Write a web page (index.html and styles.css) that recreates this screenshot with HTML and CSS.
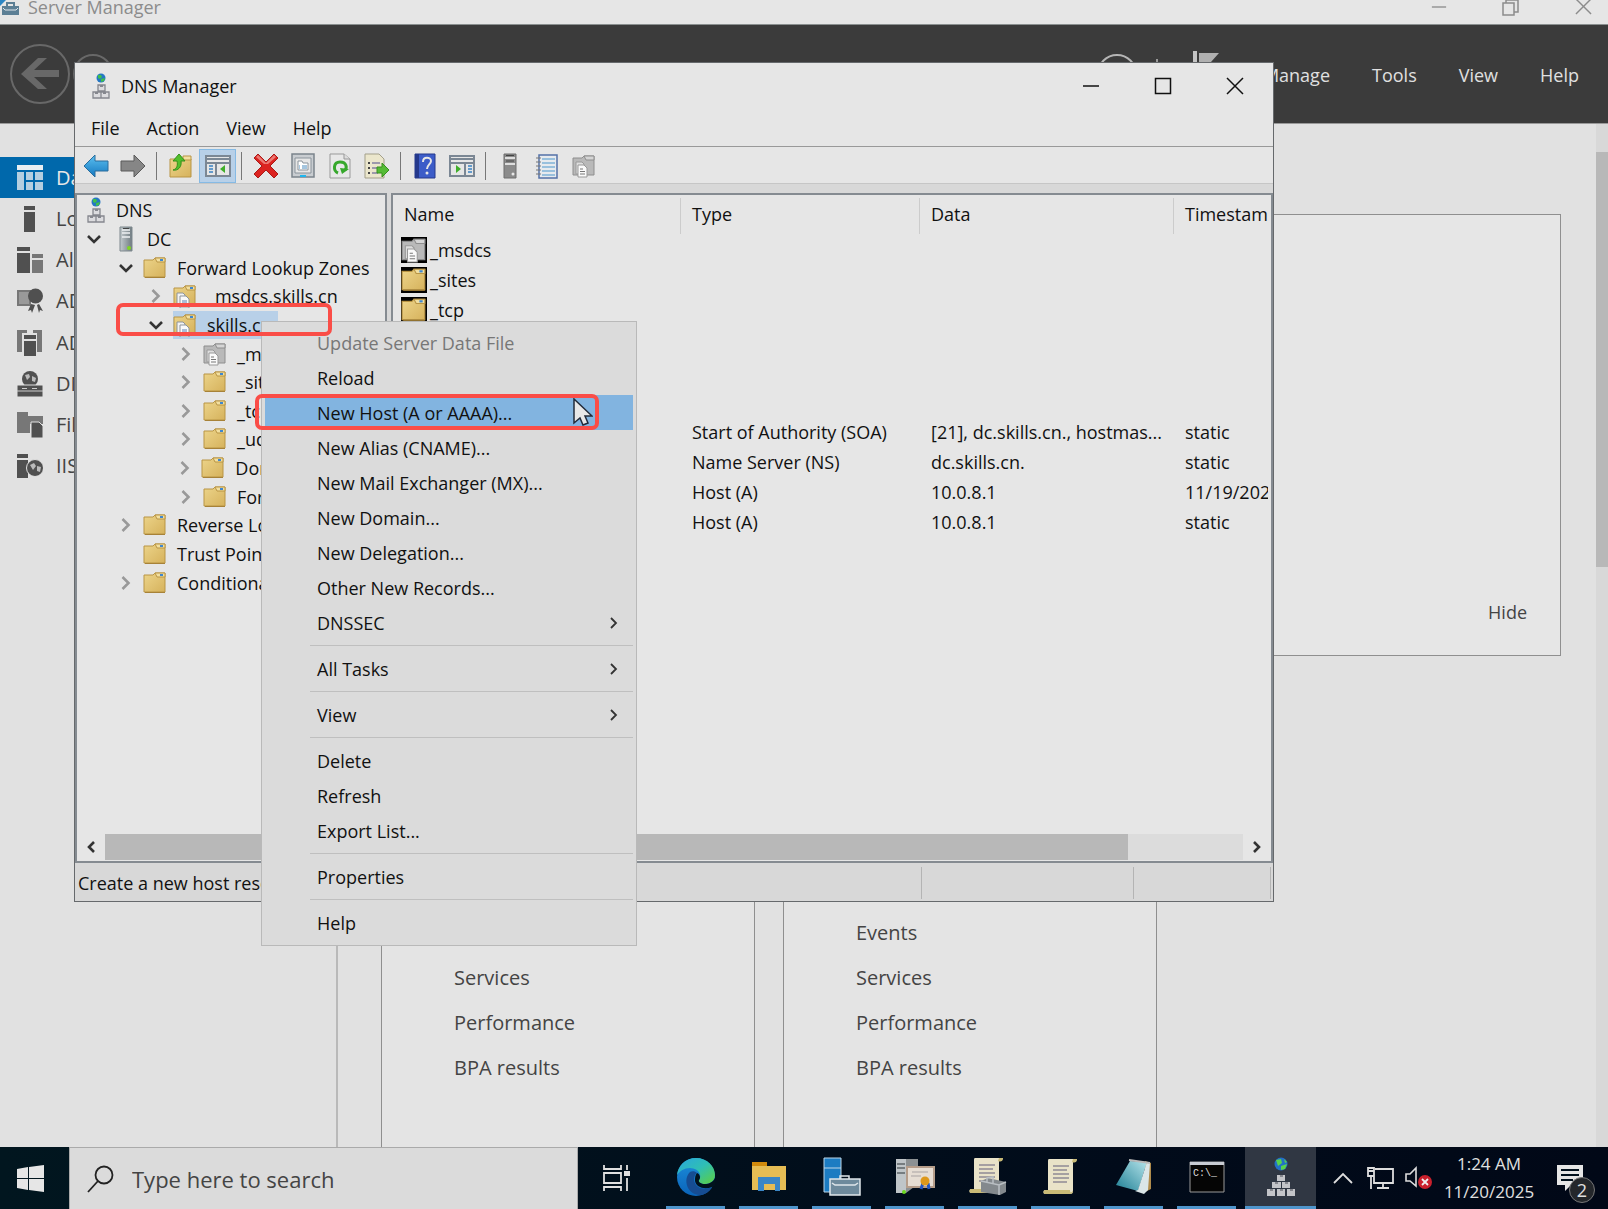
FILE: index.html
```html
<!DOCTYPE html>
<html lang="en">
<head>
    <meta charset="UTF-8">
    <title>DNS Manager</title>
    <link rel="stylesheet" href="styles.css">
</head>
<body>
    <!-- shared icons -->
    <svg class="defs" width="0" height="0">
        <defs>
            <linearGradient id="gold" x1="0" y1="0" x2="1" y2="1"><stop offset="0" stop-color="#ecd48a"/><stop offset="1" stop-color="#d6b25c"/></linearGradient>
            <linearGradient id="steel" x1="0" y1="0" x2="1" y2="0"><stop offset="0" stop-color="#c3cacd"/><stop offset="1" stop-color="#6f7b80"/></linearGradient>
            <linearGradient id="blueArrow" x1="0" y1="0" x2="0" y2="1"><stop offset="0" stop-color="#5cc0f0"/><stop offset="1" stop-color="#1478c0"/></linearGradient>
            <linearGradient id="edgeTop" x1="0" y1="0" x2="1" y2="1"><stop offset="0" stop-color="#2aa6e0"/><stop offset=".5" stop-color="#2fbfb4"/><stop offset="1" stop-color="#5fd03c"/></linearGradient>
            <linearGradient id="edgeLow" x1="0" y1="0" x2="0" y2="1"><stop offset="0" stop-color="#1d8fdc"/><stop offset="1" stop-color="#0a63b8"/></linearGradient>
            <linearGradient id="pad" x1="0" y1="1" x2="1" y2="0"><stop offset="0" stop-color="#1e7f94"/><stop offset="1" stop-color="#b4e3ea"/></linearGradient>
        </defs>
        <symbol id="i-dns" viewBox="0 0 18 26">
            <circle cx="9" cy="5" r="4.5" fill="#2577c4"/>
            <path d="M6 2l3 0 1 2-2 2-2-1zM9 6l4-1-1 3-3 1z" fill="#3fc04a"/>
            <path d="M6 12h7v6h-7zM1 19h8v6h-8zM9 19h8v6h-8z" fill="#dcdcdf" stroke="#85878e" stroke-width="1.3"/>
            <path d="M8 12h3v2h-3zM3 19h3v2h-3zM11 19h3v2h-3z" fill="#85878e"/>
        </symbol>
        <symbol id="i-server" viewBox="0 0 14 26">
            <path d="M1 1h12v24h-12z" fill="url(#steel)" stroke="#7e898e"/>
            <path d="M3 4h8M3 7h8M3 11h8" stroke="#eef1f2" stroke-width="1.6"/>
            <path d="M4 2.500h6" stroke="#444"/>
            <circle cx="10" cy="22" r="2" fill="#7fd821"/>
        </symbol>
        <symbol id="i-server-grey" viewBox="0 0 14 26">
            <path d="M1 1h12v24h-12z" fill="#8b8b8b" stroke="#6e6e6e"/>
            <path d="M2 5h10M2 11h10" stroke="#dedede" stroke-width="2"/>
            <path d="M3 2.500h8M3 8h8" stroke="#444"/>
            <circle cx="10" cy="21" r="1.500" fill="#e8e8e8"/>
        </symbol>
        <symbol id="i-folder" viewBox="0 0 24 24">
            <path d="M1 4h9l2-2h10v19h-21z" fill="url(#gold)" stroke="#b99545"/>
            <path d="M12 2h10v4h-8z" fill="#f2dfa0" stroke="#b99545"/>
            <path d="M17 4h3" stroke="#3f87cf" stroke-width="2"/>
            <path d="M2 21.500h20" stroke="#a78238"/>
        </symbol>
        <symbol id="i-page" viewBox="0 0 24 24">
            <path d="M4 9h6l2 2v9h-8z" fill="#f3f3f3" stroke="#8d949b"/>
            <path d="M7 12h6l3 3v9h-9z" fill="#fafafa" stroke="#8d949b"/>
            <path d="M9 17h5M9 19h5M9 21h4" stroke="#5b80b4"/>
        </symbol>
        <symbol id="i-zone" viewBox="0 0 24 24">
            <use href="#i-folder"/><use href="#i-page"/>
        </symbol>
        <symbol id="i-zone-grey" viewBox="0 0 24 24">
            <path d="M1 4h9l2-2h10v19h-21z" fill="#b9b9b9" stroke="#8e8e8e"/>
            <path d="M12 2h10v4h-8z" fill="#d5d5d5" stroke="#8e8e8e"/>
            <path d="M4 8h6l2 2v10h-8z" fill="#dedede" stroke="#999"/>
            <path d="M6 11h6l3 3v9h-9z" fill="#fafafa" stroke="#999"/>
            <path d="M8 15h3M8 17.500h5M8 20h5" stroke="#777"/>
        </symbol>
        <symbol id="i-down" viewBox="0 0 14 10"><path d="M1 2l6 6 6-6" fill="none" stroke="#333" stroke-width="2.600"/></symbol>
        <symbol id="i-right" viewBox="0 0 10 16"><path d="M1.500 2l6 6-6 6" fill="none" stroke="#999" stroke-width="2.600"/></symbol>
        <symbol id="i-sub" viewBox="0 0 10 14"><path d="M2 2l5 5-5 5" fill="none" stroke="#333" stroke-width="1.800"/></symbol>
        <symbol id="i-arrow" viewBox="0 0 10 14"><path d="M2 2l5 5-5 5" fill="none" stroke="#333" stroke-width="2.600"/></symbol>
        <symbol id="i-min" viewBox="0 0 18 18"><path d="M1 9h16" stroke="currentColor" stroke-width="1.500"/></symbol>
        <symbol id="i-close" viewBox="0 0 18 18"><path d="M1 1l16 16M17 1l-16 16" stroke="currentColor" stroke-width="1.500"/></symbol>
        <symbol id="i-scroll" viewBox="0 0 36 38">
            <path d="M6 1h28c-1 3-3 3-4 3v28c0 3-1 4-3 4h-25c-2 0-2-4 0-4h3v-28c0-2 0-3 1-3z" fill="#e9e3c8"/>
            <path d="M2 32h25c0 3 1 3 3 1 0 2-1 3-3 3h-25c-2 0-2-4 0-4zM30 1h4c0 4-3 4-5 3z" fill="#c9ba76"/>
            <path d="M10 8h16M10 12h14M10 16h16M10 20h16M10 24h14" stroke="#8e8b94" stroke-width="1.500"/>
        </symbol>
    </svg>

    <div class="desktop">
        <!-- Server Manager -->
        <section class="manager">
            <header class="manager-title">
                <svg width="20" height="18" viewBox="0 0 20 18"><path d="M0 0h8l-8 8z" fill="#2d86c4"/><path d="M2 8h17v9h-17z" fill="#5c7f95"/><path d="M7 8v-3h7v3" fill="none" stroke="#5c7f95" stroke-width="2"/><path d="M3 10l2 2h11l2-2" fill="none" stroke="#dfe6ea"/></svg>
                <span>Server Manager</span>
                <div class="controls">
                    <button aria-label="Minimize"><svg width="16" height="16"><use href="#i-min"/></svg></button>
                    <button aria-label="Restore"><svg width="18" height="18" viewBox="0 0 18 18"><path d="M1 5h11v12h-11zM4 5v-3h12v12h-4" fill="none" stroke="currentColor" stroke-width="1.500"/></svg></button>
                    <button aria-label="Close"><svg width="17" height="17"><use href="#i-close"/></svg></button>
                </div>
            </header>
            <div class="banner">
                <svg width="64" height="64" viewBox="0 0 64 64"><circle cx="32" cy="32" r="29" fill="none" stroke="#686868" stroke-width="2"/><path d="M13 32l17-16h9l-13 12h25v7h-25l13 12h-9z" fill="#686868"/></svg>
                <svg width="42" height="42" viewBox="0 0 42 42"><circle cx="21" cy="21" r="19" fill="none" stroke="#686868" stroke-width="2"/></svg>
                <h1>Dashboard</h1>
                <svg class="sync" width="42" height="42" viewBox="0 0 42 42"><circle cx="21" cy="21" r="19" fill="none" stroke="#b5b5b5" stroke-width="2"/></svg>
                <i class="bar"></i>
                <svg width="28" height="46" viewBox="0 0 28 46"><path d="M1 0h4v46h-4z" fill="#c4c4c4"/><path d="M7 2h20l-8 9 8 9h-20z" fill="#b0b0b0"/></svg>
                <nav>
                    <a href="#">Manage</a>
                    <a href="#">Tools</a>
                    <a href="#">View</a>
                    <a href="#">Help</a>
                </nav>
            </div>
            <div class="manager-body">
                <ul class="sidebar">
                    <li class="active"><a href="#"><svg viewBox="0 0 26 26"><path d="M0 0h26v5h-26z" fill="#e8eef2"/><path d="M0 7h7v18h-7zM9 7h7v8h-7zM18 7h8v8h-8zM9 17h7v8h-7zM18 17h8v8h-8z" fill="#b5cfe0"/></svg>Dashboard</a></li>
                    <li><a href="#"><svg viewBox="0 0 26 26"><path d="M7 0h11v4h-11zM7 6h11v20h-11z"/></svg>Local Server</a></li>
                    <li><a href="#"><svg viewBox="0 0 26 26"><path d="M0 0h13v4h-13zM0 6h13v20h-13z"/><path d="M15 7h11v4h-11zM15 13h11v13h-11z" fill="#777"/></svg>All Servers</a></li>
                    <li><a href="#"><svg viewBox="0 0 26 26"><path d="M1 3h12v14h-12z" fill="#999" stroke="#777" stroke-width="2"/><circle cx="18.500" cy="8" r="7.500"/><path d="M14 16l-3 7 3-1 1 3 3-8zM22 16l4 7-3-1-1 3-2-8z"/></svg>AD CS</a></li>
                    <li><a href="#"><svg viewBox="0 0 26 26"><path d="M0 0h10v3h-5v19h-5zM16 0h9v22h-5v-19h-4z" fill="#777"/><path d="M7 5h12v4h-12zM7 11h12v15h-12z"/></svg>AD DS</a></li>
                    <li><a href="#"><svg viewBox="0 0 26 26"><circle cx="13" cy="8" r="8"/><path d="M8 4l4-1 1 3-3 3zM15 5l4 2-1 4-3-1z" fill="#bbb"/><path d="M0 14h26v12h-26z" stroke="#e1e1e1"/><path d="M0 20h26M5 17.500h5M15 17.500h5" stroke="#ccc"/></svg>DNS</a></li>
                    <li><a href="#"><svg viewBox="0 0 26 26"><path d="M0 0h11v4h15v8h-13v9h-13z" fill="#777"/><path d="M14 10h8l4 4v12h-12z" stroke="#e1e1e1"/></svg>File and Storage Services</a></li>
                    <li><a href="#"><svg viewBox="0 0 26 26"><path d="M0 1h11v4h-11zM0 7h11v18h-11z"/><circle cx="18" cy="15" r="8.500" stroke="#e1e1e1"/><path d="M13 12l4-2 2 3-3 4zM20 13l4 1-1 5-3-1z" fill="#bbb"/></svg>IIS</a></li>
                </ul>
                <main class="dashboard">
                    <div class="welcome"><a href="#">Hide</a></div>
                    <div class="tiles">
                        <div class="tile">
                            <ul>
                                <li><i class="ok"></i>Manageability</li>
                                <li>Events</li>
                                <li>Services</li>
                                <li>Performance</li>
                                <li>BPA results</li>
                            </ul>
                        </div>
                        <div class="tile">
                            <ul>
                                <li><i class="ok"></i>Manageability</li>
                                <li>Events</li>
                                <li>Services</li>
                                <li>Performance</li>
                                <li>BPA results</li>
                            </ul>
                        </div>
                    </div>
                </main>
                <div class="vscroll"><i></i></div>
            </div>
        </section>

        <!-- DNS Manager -->
        <section class="window">
            <header class="window-title">
                <svg width="18" height="26"><use href="#i-dns"/></svg>
                <span>DNS Manager</span>
                <div class="controls">
                    <button aria-label="Minimize"><svg width="18" height="18"><use href="#i-min"/></svg></button>
                    <button aria-label="Maximize"><svg width="18" height="18" viewBox="0 0 18 18"><path d="M1.500 1.500h15v15h-15z" fill="none" stroke="currentColor" stroke-width="1.500"/></svg></button>
                    <button aria-label="Close"><svg width="18" height="18"><use href="#i-close"/></svg></button>
                </div>
            </header>
            <nav class="menubar">
                <button>File</button>
                <button>Action</button>
                <button>View</button>
                <button>Help</button>
            </nav>
            <div class="toolbar">
                <button aria-label="Back"><svg width="26" height="24" viewBox="0 0 26 24"><path d="M1 12l11-11v6h13v10h-13v6z" fill="url(#blueArrow)" stroke="#2a6c9c"/></svg></button>
                <button aria-label="Forward"><svg width="26" height="24" viewBox="0 0 26 24"><path d="M25 12l-11-11v6h-13v10h13v6z" fill="#868686" stroke="#5a5a5a"/></svg></button>
                <i class="sep"></i>
                <button aria-label="Up"><svg width="24" height="26" viewBox="0 0 24 26"><path d="M1 6h21v18h-21z" fill="url(#gold)" stroke="#b99545"/><path d="M14 3h8v4h-8z" fill="#f2dfa0" stroke="#b99545"/><path d="M4 17c4-1 5-5 4-9h-4l6-7 6 7h-4c1 6-3 10-8 9z" fill="#52bf2c" stroke="#34901a"/></svg></button>
                <button class="on" aria-label="Show tree"><svg width="26" height="22" viewBox="0 0 26 22"><path d="M1 1h24v20h-24z" fill="#e6e6e6" stroke="#7b8794" stroke-width="2"/><path d="M1 4h24M1 8h24" stroke="#7b8794" stroke-width="2"/><path d="M11 8v13" stroke="#7b8794" stroke-width="2"/><path d="M4 11h4M4 14h4M4 17h4" stroke="#3a82c4" stroke-width="1.500"/><path d="M20 10v8l-5-4z" fill="#3fae2a"/></svg></button>
                <i class="sep"></i>
                <button aria-label="Delete"><svg width="26" height="26" viewBox="0 0 26 26"><path d="M5 1l8 8 8-8 4 4-8 8 8 8-4 4-8-8-8 8-4-4 8-8-8-8z" fill="#dc2320" stroke="#a91a17"/><path d="M5 2l8 8 8-8 2 2-8 7h-4l-8-7z" fill="#ec7a74"/></svg></button>
                <button aria-label="Properties"><svg width="24" height="26" viewBox="0 0 24 26"><path d="M1 1h22v23h-22z" fill="#c9cdd1" stroke="#7b848c" stroke-width="1.500"/><path d="M4 5h16v15h-16z" fill="#e6e6e6" stroke="#8a939b"/><path d="M7 10v-2h4l1 2h5v7h-10z" fill="#fff" stroke="#8a939b"/><path d="M8 13h1M11 13h5M8 15h1M11 15h5" stroke="#4b8cbf"/><path d="M9 23h6" stroke="#1fb6ee" stroke-width="2"/></svg></button>
                <button aria-label="Refresh"><svg width="22" height="26" viewBox="0 0 22 26"><path d="M1 1h14l6 5v19h-20z" fill="#e8e8e8" stroke="#999"/><path d="M15 1v5h6" fill="#ddd" stroke="#999"/><path d="M9 20c-5-2-5-11 2-11s7 6 5 8" fill="none" stroke="#37a82c" stroke-width="3"/><path d="M11 15l9 1-7 5z" fill="#37a82c"/></svg></button>
                <button aria-label="Export List"><svg width="26" height="26" viewBox="0 0 26 26"><path d="M1 1h14l5 5v19h-19z" fill="#ebe6cc" stroke="#a39f8a"/><path d="M4 10h2M4 15h2M4 20h2" stroke="#444" stroke-width="2"/><path d="M8 10h8M8 15h5M8 20h6" stroke="#8480a0" stroke-width="1.500"/><path d="M13 14h5v-4l7 7-7 7v-4h-5z" fill="#55bb35" stroke="#38901f"/></svg></button>
                <i class="sep"></i>
                <button aria-label="Help"><svg width="22" height="26" viewBox="0 0 22 26"><path d="M1 1h20v24h-20z" fill="#3c5cc8" stroke="#24388c"/><path d="M1 1h4v24h-4z" fill="#24388c"/><path d="M9 9c0-6 8-5 8-1 0 3-4 4-4 8" fill="none" stroke="#e6e6e6" stroke-width="2"/><circle cx="13" cy="20" r="1.500" fill="#e6e6e6"/></svg></button>
                <button aria-label="Show actions"><svg width="26" height="22" viewBox="0 0 26 22"><path d="M1 1h24v20h-24z" fill="#e6e6e6" stroke="#7b8794" stroke-width="2"/><path d="M1 4h24M1 8h24" stroke="#7b8794" stroke-width="2"/><path d="M16 8v13" stroke="#7b8794" stroke-width="2"/><path d="M19 11h4M19 14h4M19 17h4" stroke="#3a82c4" stroke-width="1.500"/><path d="M7 10v8l5-4z" fill="#3fae2a"/></svg></button>
                <i class="sep"></i>
                <button aria-label="New server"><svg width="14" height="26"><use href="#i-server-grey"/></svg></button>
                <button aria-label="New record"><svg width="22" height="26" viewBox="0 0 22 26"><path d="M3 2h18v23h-18z" fill="#e6eaee" stroke="#5472a8" stroke-width="1.500"/><path d="M6 6h13M6 10h13M6 14h13M6 18h13M6 22h13" stroke="#7fb2d8" stroke-width="1.500"/><path d="M0 5h5M0 9h5M0 13h5M0 17h5M0 21h5" stroke="#777"/></svg></button>
                <button aria-label="New zone"><svg width="24" height="24"><use href="#i-zone-grey"/></svg></button>
            </div>
            <div class="panes">
                <div class="pane tree-pane">
                    <ul class="tree">
                        <li><svg class="dns" width="18" height="26"><use href="#i-dns"/></svg>DNS</li>
                        <li class="l1"><b><svg width="14" height="10"><use href="#i-down"/></svg></b><svg class="srv" width="14" height="26"><use href="#i-server"/></svg>DC</li>
                        <li class="l2"><b><svg width="14" height="10"><use href="#i-down"/></svg></b><svg class="ico"><use href="#i-folder"/></svg>Forward Lookup Zones</li>
                        <li class="l3"><b><svg width="10" height="16"><use href="#i-right"/></svg></b><svg class="ico"><use href="#i-zone"/></svg>_msdcs.skills.cn</li>
                        <li class="l3"><b><svg width="14" height="10"><use href="#i-down"/></svg></b><span class="selected"><svg class="ico"><use href="#i-zone"/></svg>skills.cn</span></li>
                        <li class="l4"><b><svg width="10" height="16"><use href="#i-right"/></svg></b><svg class="ico"><use href="#i-zone-grey"/></svg>_msdcs</li>
                        <li class="l4"><b><svg width="10" height="16"><use href="#i-right"/></svg></b><svg class="ico"><use href="#i-folder"/></svg>_sites</li>
                        <li class="l4"><b><svg width="10" height="16"><use href="#i-right"/></svg></b><svg class="ico"><use href="#i-folder"/></svg>_tcp</li>
                        <li class="l4"><b><svg width="10" height="16"><use href="#i-right"/></svg></b><svg class="ico"><use href="#i-folder"/></svg>_udp</li>
                        <li class="l4"><b><svg width="10" height="16"><use href="#i-right"/></svg></b><svg class="ico"><use href="#i-folder"/></svg>DomainDnsZones</li>
                        <li class="l4"><b><svg width="10" height="16"><use href="#i-right"/></svg></b><svg class="ico"><use href="#i-folder"/></svg>ForestDnsZones</li>
                        <li class="l2"><b><svg width="10" height="16"><use href="#i-right"/></svg></b><svg class="ico"><use href="#i-folder"/></svg>Reverse Lookup Zones</li>
                        <li class="l2"><b></b><svg class="ico"><use href="#i-folder"/></svg>Trust Points</li>
                        <li class="l2"><b><svg width="10" height="16"><use href="#i-right"/></svg></b><svg class="ico"><use href="#i-folder"/></svg>Conditional Forwarders</li>
                    </ul>
                    <div class="hscroll">
                        <button aria-label="Scroll left"><svg class="flip" width="10" height="14"><use href="#i-arrow"/></svg></button>
                        <div class="track"><i></i></div>
                        <button aria-label="Scroll right"><svg width="10" height="14"><use href="#i-arrow"/></svg></button>
                    </div>
                </div>
                <div class="pane list-pane">
                    <table>
                        <thead>
                            <tr><th class="c-name">Name</th><th class="c-type">Type</th><th class="c-data">Data</th><th>Timestamp</th></tr>
                        </thead>
                        <tbody>
                            <tr><td><svg class="tile-ico"><use href="#i-zone-grey"/></svg>_msdcs</td><td></td><td></td><td></td></tr>
                            <tr><td><svg class="tile-ico"><use href="#i-folder"/></svg>_sites</td><td></td><td></td><td></td></tr>
                            <tr><td><svg class="tile-ico"><use href="#i-folder"/></svg>_tcp</td><td></td><td></td><td></td></tr>
                            <tr><td><svg class="tile-ico"><use href="#i-folder"/></svg>_udp</td><td></td><td></td><td></td></tr>
                            <tr><td></td><td></td><td></td><td></td></tr>
                            <tr><td></td><td></td><td></td><td></td></tr>
                            <tr><td></td><td>Start of Authority (SOA)</td><td>[21], dc.skills.cn., hostmas...</td><td>static</td></tr>
                            <tr><td></td><td>Name Server (NS)</td><td>dc.skills.cn.</td><td>static</td></tr>
                            <tr><td></td><td>Host (A)</td><td>10.0.8.1</td><td>11/19/2025</td></tr>
                            <tr><td></td><td>Host (A)</td><td>10.0.8.1</td><td>static</td></tr>
                        </tbody>
                    </table>
                    <div class="hscroll">
                        <button aria-label="Scroll left"><svg class="flip" width="10" height="14"><use href="#i-arrow"/></svg></button>
                        <div class="track"><i></i></div>
                        <button aria-label="Scroll right"><svg width="10" height="14"><use href="#i-arrow"/></svg></button>
                    </div>
                </div>
            </div>
            <footer class="statusbar">
                <span class="message">Create a new host resource record</span>
                <span class="cell wide"></span>
                <span class="cell"></span>
            </footer>
        </section>

        <!-- context menu -->
        <div class="context" role="menu">
            <button disabled>Update Server Data File</button>
            <button>Reload</button>
            <button class="hover">New Host (A or AAAA)...</button>
            <button>New Alias (CNAME)...</button>
            <button>New Mail Exchanger (MX)...</button>
            <button>New Domain...</button>
            <button>New Delegation...</button>
            <button>Other New Records...</button>
            <button>DNSSEC<svg width="10" height="14"><use href="#i-sub"/></svg></button>
            <hr>
            <button>All Tasks<svg width="10" height="14"><use href="#i-sub"/></svg></button>
            <hr>
            <button>View<svg width="10" height="14"><use href="#i-sub"/></svg></button>
            <hr>
            <button>Delete</button>
            <button>Refresh</button>
            <button>Export List...</button>
            <hr>
            <button>Properties</button>
            <hr>
            <button>Help</button>
        </div>

        <svg class="cursor" width="20" height="28" viewBox="0 0 20 28"><path d="M1 1v24l6-5 3 7 5-2-3-7h7z" fill="#e8e8e8" stroke="#222b3a" stroke-width="1.500"/></svg>
        <div class="mark mark-zone"></div>
        <div class="mark mark-host"></div>
    </div>

    <footer class="taskbar">
        <button class="start" aria-label="Start"><svg width="27" height="27" viewBox="0 0 27 27"><path d="M0 4l11-2v11h-11zM12 2l15-2v13h-15zM0 14h11v11l-11-2zM12 14h15v13l-15-2z" fill="#e6e6e6"/></svg></button>
        <label class="search">
            <svg width="28" height="28" viewBox="0 0 28 28"><circle cx="17" cy="10" r="8.500" fill="none" stroke="#222" stroke-width="1.800"/><path d="M11 16l-10 11" stroke="#222" stroke-width="1.800"/></svg>
            <input type="text" placeholder="Type here to search" aria-label="Search">
        </label>
        <div class="apps">
            <button aria-label="Task View"><svg width="28" height="26" viewBox="0 0 28 26"><path d="M1 0v4h17v-4M1 26v-4h17v4M1 8h17v10h-17zM24 0v5M24 13v13" fill="none" stroke="#e0e0e0" stroke-width="1.800"/><path d="M21 6h6v5h-6z" fill="#e0e0e0"/></svg></button>
            <button class="open" aria-label="Edge"><svg width="40" height="40" viewBox="0 0 40 40"><circle cx="20" cy="20" r="19" fill="url(#edgeLow)"/><path d="M1 18c1-10 9-17 19-17 11 0 19 8 19 17 0 6-5 9-10 9-4 0-7-2-6-4 3-3 1-12-9-12-6 0-10 3-13 7z" fill="url(#edgeTop)"/><path d="M14 15c-8 8-2 24 11 23 5-1 9-4 11-8-8 4-17 1-18-7 0-3 1-6 3-7-2-2-5-2-7-1z" fill="#164c92"/><path d="M21 16c3 1 4 5 2 7-1 2 2 4 6 4 4 0 8-2 10-6v8l-3 1c-8 3-16 0-17-6 0-3 0-6 2-8z" fill="#01121d"/></svg></button>
            <button class="open" aria-label="File Explorer"><svg width="36" height="32" viewBox="0 0 36 32"><path d="M1 1h15v5h-15z" fill="#d18a0c"/><path d="M1 5h34v24h-34z" fill="#e6bd54"/><path d="M7 16h22v14h-5v-7h-11v7h-6z" fill="#3a86c6"/></svg></button>
            <button class="open" aria-label="Server Manager"><svg width="40" height="40" viewBox="0 0 40 40"><path d="M2 1h17v34h-17z" fill="#1c7cc2" stroke="#bcd6e8"/><path d="M2 11h17" stroke="#bcd6e8"/><path d="M8 22h30v16h-30z" fill="#6e8a9c" stroke="#dfe6ea" stroke-width="1.500"/><path d="M18 22v-3h9v3M10 26l3 2h20l3-2" fill="none" stroke="#dfe6ea" stroke-width="1.500"/></svg></button>
            <button class="open" aria-label="Certification Authority"><svg width="40" height="38" viewBox="0 0 40 38"><path d="M1 1h22v25l-12 9h-10z" fill="#8c9193"/><path d="M1 1h10v34h-10z" fill="#bfc5c8"/><path d="M2 6h8M2 10h8M2 15h8" stroke="#5f6568" stroke-width="1.500"/><path d="M12 9h27v20h-27z" fill="#e6ddd3" stroke="#b59d8a" stroke-width="2"/><path d="M17 14h16M16 18h10" stroke="#a9a3a3"/><path d="M28 25l-2 6M33 25l1 6" stroke="#2257c4" stroke-width="3"/><circle cx="30" cy="23" r="4.500" fill="#dd981c"/><circle cx="9" cy="34" r="2" fill="#6cd820"/></svg></button>
            <button class="open" aria-label="Policy tools"><svg width="38" height="40" viewBox="0 0 38 40"><use href="#i-scroll" width="36" height="38"/><path d="M12 24l7-3 18 4v10l-6 3-19-3z" fill="#83898d"/><path d="M12 24l18 4 7-3M30 28v10M18 25v-4l6-1v6" fill="none" stroke="#b9bfc3" stroke-width="1.500"/></svg></button>
            <button class="open" aria-label="Policy editor"><svg width="36" height="38"><use href="#i-scroll"/></svg></button>
            <button class="open" aria-label="Notepad"><svg width="38" height="36" viewBox="0 0 38 36"><path d="M30 2l6 2v26l-6 3z" fill="#b08c4c"/><path d="M15 2l17 1-9 29-22-6z" fill="url(#pad)"/><path d="M32 3l3 1-2 27-4 4-9-3 3-1z" fill="#dbe6e8"/><path d="M14 1l21 3" stroke="#b9b9b9" stroke-width="2"/></svg></button>
            <button class="open" aria-label="Command Prompt"><svg width="36" height="32" viewBox="0 0 36 32"><path d="M1 1h34v30h-34z" fill="#050505" stroke="#9a9a9a"/><path d="M1 2.500h34" stroke="#c8ccd4" stroke-width="3"/><text x="4" y="15" class="prompt">C:\_</text></svg></button>
            <button class="open current" aria-label="DNS Manager"><svg width="30" height="40" viewBox="0 0 30 40"><circle cx="15" cy="7" r="6.500" fill="#2370c6"/><path d="M10 3l5-1 1 4-4 3zM15 9l6-2-2 5-4 1zM18 2l3 3-2 1z" fill="#58d24c"/><path d="M11 18h8v6h-8zM6 25h9v6h-9zM16 25h8v6h-8zM1 32h8v7h-8zM11 32h8v7h-8zM21 32h8v7h-8z" fill="#c3c4c8"/><path d="M14 18h3v2h-3zM9 25h3v2h-3zM19 25h3v2h-3zM4 32h3v2h-3zM14 32h3v2h-3zM24 32h3v2h-3z" fill="#85878e"/></svg></button>
        </div>
        <div class="tray">
            <button class="more" aria-label="Hidden icons"><svg width="20" height="12" viewBox="0 0 20 12"><path d="M1 11l9-9 9 9" fill="none" stroke="#ddd" stroke-width="1.800"/></svg></button>
            <svg width="28" height="24" viewBox="0 0 28 24"><path d="M8 3h18v14h-19v-6M16 17v4M10 22h12M4 11v12M1 2h6v8h-6zM1 5h6" fill="none" stroke="#ddd" stroke-width="1.800"/></svg>
            <svg width="28" height="24" viewBox="0 0 28 24"><path d="M1 8h4l6-6v18l-6-5h-4z" fill="none" stroke="#ddd" stroke-width="1.600"/><circle cx="20" cy="16" r="7" fill="#c9202c"/><path d="M17 13l6 6M23 13l-6 6" stroke="#eee" stroke-width="1.800"/></svg>
            <div class="clock"><span>1:24 AM</span><span>11/20/2025</span></div>
            <button class="notify" aria-label="Notifications"><svg width="27" height="27" viewBox="0 0 27 27"><path d="M0 0h26v20h-12l-6 6v-6h-8z" fill="#e6e6e6"/><path d="M4 5h18M4 10h18M4 15h12" stroke="#01101c" stroke-width="1.800"/></svg><span class="badge">2</span></button>
        </div>
    </footer>
</body>
</html>
```
FILE: styles.css
```css
* {
    box-sizing: border-box;
}
body {
    margin: 0;
    height: 100vh;
    display: flex;
    flex-direction: column;
    overflow: hidden;
    font-family: "Open Sans", "Noto Sans", sans-serif;
    font-size: 18px;
    line-height: 24px;
    color: #111;
    background: #e1e1e1;
}
button {
    font: inherit;
    color: inherit;
    background: none;
    border: none;
    padding: 0;
    display: flex;
    align-items: center;
    justify-content: center;
}
ul {
    list-style: none;
    margin: 0;
    padding: 0;
}
a {
    color: inherit;
    text-decoration: none;
}
svg {
    flex: none;
}
.defs {
    position: absolute;
}
.desktop {
    position: relative;
    flex: 1;
    min-height: 0;
    display: flex;
}
.controls {
    display: flex;
    margin-left: auto;
}
.controls button {
    width: 72px;
}

/* Server Manager */
.manager {
    flex: 1;
    display: flex;
    flex-direction: column;
    min-width: 0;
}
.manager-title {
    display: flex;
    align-items: center;
    gap: 8px;
    height: 25px;
    padding-bottom: 11px;
    background: #e6e6e6;
    border-bottom: 1px solid #8a8f8f;
    color: #8c8c8c;
}
.manager-title .controls {
    margin-right: -11px;
}
.banner {
    display: flex;
    align-items: center;
    height: 99px;
    padding: 0 29px 0 8px;
    background: #3b3b3b;
    border-bottom: 1px solid #999;
    color: #e0e0e0;
}
.banner h1 {
    margin: 0 0 0 446px;
    font-size: 30px;
    font-weight: 400;
}
.banner .sync {
    margin-left: auto;
}
.bar {
    width: 2px;
    height: 30px;
    margin: 0 34px 0 18px;
    background: #999;
}
.banner nav {
    display: flex;
    gap: 42px;
    margin-left: 43px;
    padding-top: 2px;
}
.manager-body {
    flex: 1;
    min-height: 0;
    display: flex;
    overflow: hidden;
}
.sidebar {
    display: flex;
    flex-direction: column;
    width: 338px;
    height: 100%;
    padding: 33px 0 660px;
    border-right: 2px solid #b9b9b9;
    font-size: 20px;
    color: #444;
}
.sidebar li {
    flex: 1;
    display: flex;
}
.sidebar a {
    display: flex;
    align-items: center;
    gap: 13px;
    padding-left: 17px;
}
.sidebar svg {
    width: 26px;
    height: 26px;
    fill: #505050;
}
.sidebar .active {
    background: #0068ab;
    color: #e6e6e6;
}
.dashboard {
    flex: 1;
    min-width: 0;
    padding: 90px 35px 0 43px;
    overflow: hidden;
}
.welcome {
    display: flex;
    align-items: flex-end;
    justify-content: flex-end;
    height: 442px;
    padding: 0 33px 31px;
    background: #e6e6e6;
    border: 1px solid #8f8f8f;
    color: #444;
}
.tiles {
    display: flex;
    gap: 28px;
    margin-top: 144px;
}
.tile {
    width: 374px;
    height: 400px;
    padding: 64px 0 0 72px;
    background: #e4e4e4;
    border: 1px solid #8f8f8f;
    font-size: 20px;
    color: #444;
}
.tile li {
    display: flex;
    align-items: center;
    height: 45px;
}
.ok {
    width: 26px;
    height: 26px;
    margin: 0 26px 0 -52px;
    border-radius: 50%;
    background: #35a02c;
}
.vscroll {
    width: 12px;
    padding-top: 28px;
    background: #d8d8d8;
}
.vscroll i {
    display: block;
    height: 415px;
    background: #b8b8b8;
}

/* DNS Manager */
.window {
    position: absolute;
    top: 62px;
    right: 334px;
    bottom: 245px;
    left: 74px;
    display: flex;
    flex-direction: column;
    background: #e6e6e6;
    border: 1px solid #66696c;
}
.window-title {
    display: flex;
    align-items: center;
    gap: 11px;
    height: 46px;
    padding: 0 2px 0 17px;
}
.menubar {
    display: flex;
    gap: 1px;
    height: 38px;
    padding-left: 3px;
    border-bottom: 1px solid #999;
}
.menubar button {
    padding: 0 13px;
}
.toolbar {
    display: flex;
    align-items: center;
    height: 37px;
    padding: 2px 0 0 2px;
    border-bottom: 1px solid #c6c6c6;
}
.toolbar button {
    width: 37px;
    height: 34px;
}
.toolbar .on {
    background: #b8d0e8;
    border: 1px solid #86bae4;
}
.sep {
    width: 1px;
    height: 28px;
    margin: 0 5px;
    background: #777;
}
.panes {
    flex: 1;
    min-height: 0;
    display: flex;
    gap: 4px;
    padding-top: 9px;
    background: #d8d8d8;
}
.pane {
    display: flex;
    flex-direction: column;
    justify-content: space-between;
    min-width: 0;
    background: #e6e6e6;
    border: 2px solid #858b91;
    overflow: hidden;
}
.tree-pane {
    width: 312px;
}
.list-pane {
    flex: 1;
}
.tree {
    display: flex;
    flex-direction: column;
    height: 402px;
    padding-top: 1px;
    white-space: nowrap;
}
.tree li {
    flex: 1;
    display: flex;
    align-items: center;
}
.tree b {
    display: flex;
    justify-content: center;
    width: 34px;
}
.ico {
    width: 24px;
    height: 24px;
    margin-right: 10px;
}
.dns {
    margin: 0 11px 0 10px;
}
.srv {
    margin: 0 14px 0 8px;
}
.l2 {
    padding-left: 32px;
}
.l3 {
    padding-left: 62px;
}
.l4 {
    padding-left: 92px;
}
.selected {
    display: flex;
    align-items: center;
    align-self: stretch;
    padding-right: 6px;
    background: #b8d0e8;
}
table {
    width: calc(100% - 3px);
    table-layout: fixed;
    border-collapse: collapse;
    white-space: nowrap;
}
th {
    height: 42px;
    padding: 0 0 4px 11px;
    font-weight: 400;
    text-align: left;
    overflow: hidden;
    background: linear-gradient(#ccc, #ccc) right 3px / 1px 36px no-repeat;
}
th:last-child {
    background: none;
}
.c-name {
    width: 288px;
}
.c-type {
    width: 239px;
}
.c-data {
    width: 254px;
}
td {
    height: 30px;
    padding: 0 0 0 11px;
    overflow: hidden;
}
td:first-child {
    padding-left: 8px;
}
.tile-ico {
    width: 26px;
    height: 26px;
    margin: 0 3px 4px 0;
    background: #000;
    vertical-align: middle;
}
.hscroll {
    display: flex;
    height: 28px;
    padding: 1px 0;
}
.hscroll button {
    width: 28px;
}
.track {
    flex: 1;
    background: #dcdcdc;
}
.track i {
    display: block;
    width: 86%;
    height: 100%;
    background: #b8b8b8;
}
.flip {
    transform: scaleX(-1);
}
.statusbar {
    display: flex;
    height: 38px;
    padding: 4px 2px 2px 3px;
    background: #d8d8d8;
}
.message {
    flex: 1;
    align-self: center;
}
.cell {
    width: 138px;
    border-left: 1px solid #b4b4b4;
    border-right: 1px solid #b4b4b4;
}
.cell.wide {
    width: 212px;
    border-right: none;
}

/* context menu */
.context {
    position: absolute;
    top: 321px;
    left: 261px;
    width: 376px;
    padding: 3px 3px 5px;
    background: #dbdbdb;
    border: 1px solid #b9b9b9;
}
.context button {
    width: 100%;
    height: 35px;
    padding: 0 14px 0 52px;
    justify-content: space-between;
}
.context button:disabled {
    color: #777;
}
.context .hover {
    background: #82b4e0;
}
.context hr {
    height: 1px;
    margin: 5px 0 5px 45px;
    border: none;
    background: #bfbfbf;
}
.cursor {
    position: absolute;
    top: 398px;
    left: 573px;
}
.mark {
    position: absolute;
    border: 4px solid #fa4d47;
    border-radius: 7px;
}
.mark-zone {
    top: 303px;
    left: 116px;
    width: 216px;
    height: 33px;
}
.mark-host {
    top: 394px;
    left: 255px;
    width: 344px;
    height: 36px;
}

/* taskbar */
.taskbar {
    display: flex;
    height: 62px;
    background: linear-gradient(90deg, #01161f, #010b1a 70%, #010817);
    color: #e0e0e0;
}
.start {
    width: 69px;
    padding-right: 9px;
}
.search {
    display: flex;
    align-items: center;
    gap: 17px;
    width: 509px;
    padding-left: 17px;
    background: #dbdbdb;
    border: 1px solid #aaa;
    border-bottom: none;
}
.search input {
    flex: 1;
    height: 40px;
    padding: 0;
    border: none;
    outline: none;
    background: none;
    font: inherit;
    font-size: 22px;
    line-height: 36px;
}
.search input::placeholder {
    color: #444;
    opacity: 1;
}
.apps {
    display: flex;
    gap: 14px;
    padding-left: 6px;
}
.apps button {
    width: 59px;
}
.apps button:first-child {
    width: 68px;
    padding-right: 2px;
}
.apps .open {
    border-bottom: 3px solid #4f95cc;
}
.apps .current {
    width: 71px;
    margin-left: -5px;
    background: #303743;
}
.prompt {
    font-family: "Liberation Mono", monospace;
    font-size: 10px;
    fill: #ddd;
}
.tray {
    display: flex;
    align-items: center;
    gap: 10px;
    margin-left: auto;
    padding-right: 24px;
}
.more {
    width: 28px;
}
.clock {
    display: flex;
    flex-direction: column;
    width: 92px;
    font-size: 17px;
    line-height: 28px;
    text-align: center;
}
.notify {
    position: relative;
    margin-left: 12px;
}
.badge {
    position: absolute;
    top: 12px;
    left: 12px;
    width: 26px;
    height: 26px;
    border: 1px solid #777;
    border-radius: 50%;
    background: #24272b;
}
```
